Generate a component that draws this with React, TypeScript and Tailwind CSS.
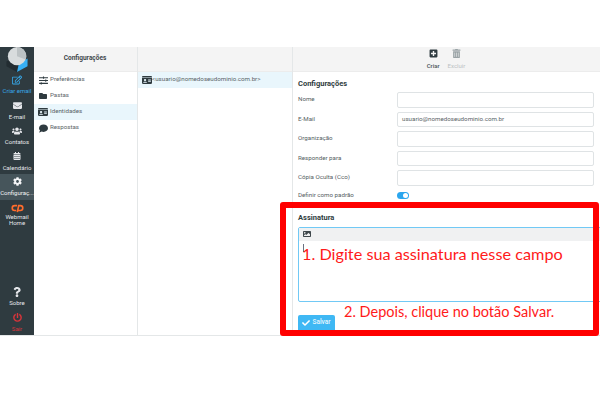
import {
  FaCalendarAlt,
  FaCheck,
  FaCog,
  FaComment,
  FaEnvelope,
  FaFolder,
  FaIdCard,
  FaImage,
  FaPlusSquare,
  FaPowerOff,
  FaQuestion,
  FaRegEdit,
  FaSlidersH,
  FaTrashAlt,
  FaUsers,
} from "react-icons/fa";

const folders = [
  { label: "Preferências", icon: <FaSlidersH size={9} /> },
  { label: "Pastas", icon: <FaFolder size={8} /> },
  { label: "Identidades", icon: <FaIdCard size={10} />, active: true },
  { label: "Respostas", icon: <FaComment size={9} /> },
];

const fields = [
  { label: "Nome", value: "" },
  { label: "E-Mail", value: "usuario@nomedoseudominio.com.br" },
  { label: "Organização", value: "" },
  { label: "Responder para", value: "" },
  { label: "Cópia Oculta (Cco)", value: "" },
];

function NavItem({ icon, label, className }: { icon: React.ReactNode; label: string; className?: string }) {
  return (
    <div className={`flex h-[25.5px] w-full shrink-0 flex-col items-center justify-center text-[6px] leading-[8px] ${className ?? "text-gray-200"}`}>
      <span className="flex h-[11px] items-center">{icon}</span>
      <span className="mt-[2px] whitespace-nowrap text-center">{label}</span>
    </div>
  );
}

function Logo() {
  return (
    <svg viewBox="0 0 24 26" className="h-[25px] w-[24px]">
      <path d="M1 15 L12 10 L23 15 L23 20 L12 26 L1 20 Z" fill="#222c31" />
      <path d="M12 26 L23 20 L23 12 L14 17 Z" fill="#37b0f5" />
      <circle cx="12" cy="9.5" r="9.5" fill="#d8dcdd" />
      <path d="M12 0 A9.5 9.5 0 0 1 21 13 L12 9.5 Z" fill="#bcc2c4" />
    </svg>
  );
}

function CpanelIcon() {
  return (
    <svg viewBox="0 0 16 12" className="h-[10px] w-[13px]" fill="none" stroke="#ff6c2c" strokeWidth="2">
      <path d="M7.5 3H4.5a3 3 0 0 0 0 6H6.5" />
      <path d="M8.5 9H11.5a3 3 0 0 0 0-6H9.5L7.8 11" />
    </svg>
  );
}

export default function App() {
  return (
    <div className="relative h-[400px] w-[600px] overflow-hidden bg-white pt-[47px] font-['Roboto',sans-serif] text-[#555e63]">
      <div className="flex h-[289px] border-b border-[#e4e7e8]">
        <aside className="flex w-[34px] shrink-0 flex-col items-center overflow-hidden bg-[#2f3b40]">
          <div className="flex h-[25px] shrink-0 items-center justify-center">
            <Logo />
          </div>
          <NavItem icon={<FaRegEdit size={10} />} label="Criar email" className="text-[#37a8e8]" />
          <NavItem icon={<FaEnvelope size={9} />} label="E-mail" />
          <NavItem icon={<FaUsers size={10} />} label="Contatos" />
          <NavItem icon={<FaCalendarAlt size={8} />} label="Calendário" />
          <NavItem icon={<FaCog size={9} />} label="Configuraç..." className="bg-[#46555b] text-gray-100" />
          <div className="flex w-full flex-col items-center pt-[3px] text-center text-[6px] leading-[6.5px] text-gray-200">
            <CpanelIcon />
            <span className="mt-[1px]">Webmail</span>
            <span>Home</span>
          </div>
          <div className="mt-auto flex w-full flex-col items-center">
            <NavItem icon={<FaQuestion size={10} />} label="Sobre" />
            <NavItem icon={<FaPowerOff size={9} />} label="Sair" className="text-[#d9343a]" />
          </div>
        </aside>

        <section className="w-[104px] shrink-0 border-r border-[#e4e7e8]">
          <div className="flex h-[25px] items-center justify-center border-b border-[#ececec] bg-[#f4f4f4] pr-[1px] text-[6.5px] font-bold text-[#3f484c]">
            Configurações
          </div>
          <ul className="text-[6.2px] text-[#5b6468]">
            {folders.map((f) => (
              <li
                key={f.label}
                className={`flex h-[16px] items-center gap-[2px] pl-[4px] ${f.active ? "bg-[#e9f6fc]" : ""}`}
              >
                <span className="flex w-[10px] justify-center text-[#2f3b40]">{f.icon}</span>
                {f.label}
              </li>
            ))}
          </ul>
        </section>

        <section className="w-[155px] shrink-0 border-r border-[#e4e7e8]">
          <div className="h-[25px] border-b border-[#ececec] bg-[#f4f4f4]" />
          <div className="flex h-[16px] items-center bg-[#e9f6fc] pl-[4px] text-[6.2px] text-[#5b6468]">
            <FaIdCard size={10} className="text-[#2f3b40]" />
            {"<usuario@nomedoseudominio.com.br>"}
          </div>
        </section>

        <main className="flex-1">
          <div className="flex h-[25px] items-center justify-center gap-[8px] border-b border-[#ececec] bg-[#f4f4f4] pr-[1px] text-[6px]">
            <div className="flex flex-col items-center font-medium text-[#4a5459]">
              <FaPlusSquare size={9} className="mb-[3px] text-[#2f3b40]" />
              Criar
            </div>
            <div className="flex flex-col items-center text-[#bcc2c4]">
              <FaTrashAlt size={9} className="mb-[3px] text-[#9aa3a6]" />
              Excluir
            </div>
          </div>
          <div className="pl-[5px] pr-[6px] pt-[6px]">
            <h2 className="text-[7.5px] font-bold leading-[12px] text-[#2f3b40]">Configurações</h2>
            <div className="mt-[2px] flex flex-col gap-[4px]">
              {fields.map((f) => (
                <div key={f.label} className="flex h-[15.5px] items-start text-[6.2px]">
                  <span className="w-[99px] shrink-0 pt-[2px] leading-[11px]">{f.label}</span>
                  <div className="flex h-full flex-1 items-center rounded-[2px] border border-[#dfe3e5] pl-[4px] text-[#5b6468]">
                    {f.value}
                  </div>
                </div>
              ))}
            </div>
            <div className="mt-[3px] flex h-[14px] items-center text-[6.2px]">
              <span className="w-[99px] shrink-0">Definir como padrão</span>
              <span className="flex h-[7px] w-[12px] items-center justify-end rounded-full bg-[#2ba6ee] pr-[1px]">
                <span className="h-[5px] w-[5px] rounded-full bg-white" />
              </span>
            </div>
            <h2 className="mt-[9px] text-[7.5px] font-bold leading-[12px] text-[#2f3b40]">Assinatura</h2>
            <div className="mt-[3px] -mr-[10px] h-[75px] rounded-[2px] border border-[#71c9f5]">
              <div className="flex h-[13px] items-center bg-[#f0f1f2] pl-[4px] text-[#3f484c]">
                <FaImage size={8} />
              </div>
              <div className="ml-[4px] mt-[3px] h-[8px] w-px bg-gray-500" />
            </div>
            <button className="mt-[13px] flex h-[17px] w-[37px] items-center justify-center gap-[2px] rounded-t-[2px] bg-[#3fb8f4] text-[6.5px] font-medium text-[#e6f6fe]">
              <FaCheck size={8} className="text-white" />
              Salvar
            </button>
          </div>
        </main>
      </div>

      {/* marcacao vermelha por cima da tela */}
      <div className="absolute left-[280px] top-[202px] h-[134px] w-[319px] rounded-[3px] border-[6px] border-[#ff0000]" />
      <span className="absolute left-[302px] top-[243px] whitespace-nowrap font-['Lato',sans-serif] text-[16.25px] leading-[22px] text-[#ff1a1a]">
        1. Digite sua assinatura nesse campo
      </span>
      <span className="absolute left-[344px] top-[302px] whitespace-nowrap font-['Lato',sans-serif] text-[14.5px] leading-[20px] text-[#ff1a1a]">
        2. Depois, clique no botão Salvar.
      </span>
    </div>
  );
}
